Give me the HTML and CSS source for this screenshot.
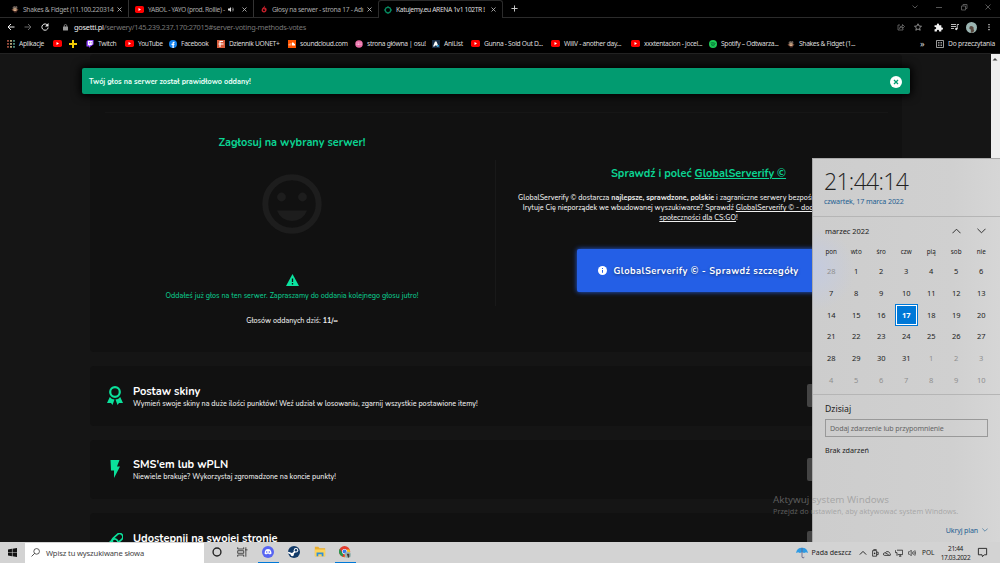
FILE: index.html
```
<!DOCTYPE html>
<html lang="pl">
  <head>
    <meta charset="utf-8">
    <title>Katujemy.eu ARENA 1v1 102TR</title>
    <link rel="stylesheet" href="styles.css">
  </head>
  <body>
    <svg class="defs">
      <symbol id="yt" viewBox="0 0 18 14"><rect width="18" height="14" rx="3.5" fill="#f00"/><path d="M7 4l5 3-5 3z" fill="#fff"/></symbol>
      <symbol id="x" viewBox="0 0 10 10"><path d="M1 1l8 8M9 1L1 9" stroke="currentColor" stroke-width="1.7" fill="none"/></symbol>
      <symbol id="fidget" viewBox="0 0 16 16"><path d="M3 5l3-3 3 1 3-1 1 4-2 3H4z" fill="#6d6058"/><path d="M1 9l3-1h8l3 1-3 3H4z" fill="#7a4a38"/><circle cx="8" cy="9" r="3.500" fill="#d9b08b"/><path d="M5 12h7l-1 3H6z" fill="#50302a"/><path d="M5 8h2M9 8h2" stroke="#222" stroke-width="1.5"/></symbol>
      <symbol id="down" viewBox="0 0 10 6"><path d="M.5.5L5 5 9.500.5" stroke="currentColor" stroke-width="1" fill="none"/></symbol>
      <symbol id="up" viewBox="0 0 10 6"><path d="M.5 5.500L5 1l4.500 4.500" stroke="currentColor" stroke-width="1" fill="none"/></symbol>
    </svg>

    <div class="tabs">
      <div class="tab t1"><svg class="i8"><use href="#fidget"/></svg><span class="name">Shakes &amp; Fidget (11.100.220314</span><svg class="x"><use href="#x"/></svg></div>
      <div class="tab t2"><svg class="yt"><use href="#yt"/></svg><span class="name">YABOL - YAYO (prod. Rollie) -</span>
        <svg class="snd" viewBox="0 0 12 10"><path d="M0 3h3l3-3v10L3 7H0z" fill="#ddd"/><path d="M8 3q2 2 0 4M9.500 1q3 4 0 8" stroke="#ddd" fill="none"/></svg>
        <svg class="x"><use href="#x"/></svg></div>
      <div class="tab t3"><svg class="i8" viewBox="0 0 16 16"><path d="M9 1q-1 3-4 5-3 4-1 7 4 4 8 0 3-5-1-8-1 2-2 2 1-3 0-6zM7 8q3 0 3 3-2 3-4 0 0-2 1-3z" fill="#c9202b" fill-rule="evenodd"/></svg><span class="name">Głosy na serwer - strona 17 - Adı</span><svg class="x"><use href="#x"/></svg></div>
      <div class="tab t4"><svg class="i8" viewBox="0 0 16 16"><circle cx="8" cy="8" r="5.500" fill="none" stroke="#07875e" stroke-width="2.500"/><path d="M8 0v3M8 13v3M0 8h3M13 8h3" stroke="#07875e" stroke-width="2"/></svg><span class="name">Katujemy.eu ARENA 1v1 102TR !</span><svg class="x"><use href="#x"/></svg></div>
      <svg class="plus" viewBox="0 0 8 8"><path d="M4 .5v7M.5 4h7" stroke="#ccc" stroke-width="1.100"/></svg>
      <div class="window">
        <svg viewBox="0 0 8 8"><path d="M1.500 2.500L4 5l2.500-2.500" fill="none" stroke="#555"/></svg>
        <svg viewBox="0 0 8 8"><path d="M1 4.500h6" stroke="#555"/></svg>
        <svg viewBox="0 0 8 8"><path d="M1.500 3h4v4h-4zM3 3V1.500h4v4H5.500" fill="none" stroke="#555"/></svg>
        <svg viewBox="0 0 8 8"><path d="M1.500 1.500l5 5M6.500 1.500l-5 5" stroke="#555" fill="none"/></svg>
      </div>
    </div>

    <div class="toolbar">
      <svg viewBox="0 0 16 16"><path d="M15 8H2M8 2L2 8l6 6" fill="none" stroke="#eee" stroke-width="2"/></svg>
      <svg viewBox="0 0 16 16"><path d="M1 8h13M8 2l6 6-6 6" fill="none" stroke="#666" stroke-width="2"/></svg>
      <svg viewBox="0 0 16 16"><path d="M13.500 5A6.300 6.300 0 1 0 14.300 9" fill="none" stroke="#eee" stroke-width="2"/><path d="M15 0v7H8z" fill="#eee"/></svg>
      <svg class="lock" viewBox="0 0 10 14"><rect y="5" width="10" height="8" rx="1" fill="#999"/><path d="M2.500 6V3.500a2.500 2.500 0 0 1 5 0V6" fill="none" stroke="#999" stroke-width="1.500"/></svg>
      <div class="url"><b>gosetti.pl</b>/serwery/145.239.237.170:27015#server-voting-methods-votes</div>
      <div class="actions">
        <svg viewBox="0 0 16 16"><path d="M6 4H2v10h10v-3M5 11q0-5 6-5V3l4 4-4 4V8Q7 8 5 11z" fill="none" stroke="#888" stroke-width="1.300"/></svg>
        <svg viewBox="0 0 16 16"><path d="M8 1.500l2 4.500 5 .5-3.800 3.200 1.200 4.800L8 12l-4.400 2.500 1.200-4.800L1 6.500 6 6z" fill="none" stroke="#bbb" stroke-width="1.400"/></svg>
        <svg class="puzzle" viewBox="0 0 16 16"><path d="M1 4h4V3a2 2 0 0 1 4 0v1h4v4h1a2 2 0 0 1 0 4h-1v3H9v-1a2 2 0 0 0-4 0v1H1v-4h1a2 2 0 0 0 0-4H1z" fill="#f3f3f3"/></svg>
        <svg viewBox="0 0 16 16"><path d="M0 3h10M0 7h10M0 11h6M12.500 12V3H16" fill="none" stroke="#ddd" stroke-width="1.700"/><circle cx="10.500" cy="12" r="2.300" fill="#ddd"/></svg>
        <svg class="avatar" viewBox="0 0 16 16"><circle cx="8" cy="8" r="8" fill="#9bb5b2"/><path d="M5 8q0-3 4-2 3 1 2 4l1 3-3 2.500H7V11l-2-1z" fill="#58483f"/></svg>
        <svg viewBox="0 0 16 16"><path d="M8 2v2.500M8 7v2.500M8 12v2.500" stroke="#ddd" stroke-width="2.500"/></svg>
      </div>
    </div>

    <div class="bookmarks">
      <div><svg class="i8" viewBox="0 0 16 16"><g stroke-width="3.500" stroke-dasharray="3.500 2.500"><path d="M2 0v16" stroke="#a54"/><path d="M8 0v16" stroke="#cb8"/><path d="M14 0v16" stroke="#598"/></g></svg>Aplikacje</div>
      <div><svg class="yt"><use href="#yt"/></svg></div>
      <div><svg class="i8" viewBox="0 0 16 16"><path d="M8 0v16M0 8h16" stroke="#f2cb05" stroke-width="4"/></svg></div>
      <div><svg class="i8" viewBox="0 0 16 16"><path d="M1 3l3-3h11v9l-6 4-3 3v-3H1z" fill="#9147ff"/><path d="M4 2h9v6l-2 2H8l-2 2v-2H4z" fill="#fff"/><path d="M7 4v3M10.500 4v3" stroke="#9147ff" stroke-width="1.500"/></svg>Twitch</div>
      <div><svg class="yt"><use href="#yt"/></svg>YouTube</div>
      <div><svg class="i8" viewBox="0 0 16 16"><circle cx="8" cy="8" r="8" fill="#1482ee"/><path d="M7 16v-6H5V7.500h2V6q0-3 4-2.500V6H9.500v1.500H11L10.700 10H9.500v6z" fill="#fff"/></svg>Facebook</div>
      <div><svg class="i8" viewBox="0 0 16 16"><rect width="16" height="16" fill="#d85c3c"/><path d="M6 2v12M3 8h10M12 3H7" stroke="#fff" stroke-width="2.200"/></svg>Dziennik UONET+</div>
      <div><svg class="i8" viewBox="0 0 16 16"><rect width="16" height="16" fill="#f50"/><path d="M8 5q4-1 4 2 3 0 2 4H8z" fill="#fff"/><path d="M2 8v3M4 7v4M6 6v5" stroke="#fff"/></svg>soundcloud.com</div>
      <div><svg class="i8" viewBox="0 0 16 16"><circle cx="8" cy="8" r="7.500" fill="#e86ca5"/><path d="M3 6h10M3 9h10" stroke="#f6bdd8" stroke-width="2" stroke-dasharray="2 1"/></svg>strona główna | osu!</div>
      <div><svg class="i8" viewBox="0 0 16 16"><rect width="16" height="16" fill="#172b42"/><path d="M2 13L6 3h3l4 10h-3l-1-2H6l-1 2z" fill="#fff"/><path d="M11 10h3v3h-5" fill="#1c9bd8"/></svg>AniList</div>
      <div><svg class="yt"><use href="#yt"/></svg>Gunna - Sold Out D...</div>
      <div><svg class="yt"><use href="#yt"/></svg>WillV - another day...</div>
      <div><svg class="yt"><use href="#yt"/></svg>xxxtentacion - jocel...</div>
      <div><svg class="i8" viewBox="0 0 16 16"><circle cx="8" cy="8" r="8" fill="#1dc956"/><path d="M3 6q5-2 10 1M4 9q4-2 8 0M5 11.500q3-1 6 .5" fill="none" stroke="#063" stroke-width="1.500"/></svg>Spotify – Odtwarza...</div>
      <div><svg class="i8"><use href="#fidget"/></svg>Shakes &amp; Fidget (1...</div>
      <div class="more">»</div>
      <div class="later"><svg class="i8" viewBox="0 0 16 16"><path d="M1 1h14v14H1zM4 5h3M9 5h3M4 8h3M9 8h3M4 11h3M9 11h3" fill="none" stroke="#ccc" stroke-width="1.500"/></svg>Do przeczytania</div>
    </div>

    <main class="page">
      <div class="content">
        <section class="card vote">
          <hr>
          <div class="cols">
            <div class="left">
              <h2>Zagłosuj na wybrany serwer!</h2>
              <svg class="smile" viewBox="0 0 60 60"><circle cx="30" cy="30" r="26.700" fill="none" stroke="#1d1d1d" stroke-width="6"/><circle cx="19.500" cy="23" r="4.400" fill="#1d1d1d"/><circle cx="40.500" cy="23" r="4.400" fill="#1d1d1d"/><path d="M15 36.500h30q-4 10.500-15 10.500T15 36.500z" fill="#1d1d1d"/></svg>
              <svg class="warn" viewBox="0 0 26 24"><path d="M13 0l13 24H0z" fill="#0be3a0"/><path d="M13 9v7M13 18v3" stroke="#111" stroke-width="2.600"/></svg>
              <p class="done">Oddałeś już głos na ten serwer. Zapraszamy do oddania kolejnego głosu jutro!</p>
              <p class="count">Głosów oddanych dziś: <b>11/∞</b></p>
            </div>
            <div class="right">
              <h2>Sprawdź i poleć <u>GlobalServerify ©</u></h2>
              <p class="text">GlobalServerify © dostarcza <b>najlepsze, sprawdzone, polskie</b> i zagraniczne serwery bezpośrednio do Twojej gry.<br>Irytuje Cię nieporządek we wbudowanej wyszukiwarce? Sprawdź <u>GlobalServerify © - dodatek dla całej naszej</u><br><u>społeczności dla CS:GO</u>!</p>
              <div class="button"><svg viewBox="0 0 16 16"><circle cx="8" cy="8" r="8" fill="#fff"/><path d="M8 3.500v2M8 7v5" stroke="#245fe6" stroke-width="1.800"/></svg>GlobalServerify © - Sprawdź szczegóły</div>
            </div>
          </div>
        </section>

        <section class="card method">
          <svg viewBox="0 0 16 20"><circle cx="8" cy="6" r="4.800" fill="none" stroke="#0be09b" stroke-width="2.200"/><path d="M2.800 11q2 2.500 4.700 2.500L5.500 19 4 17 0 17zM13.200 11q-2 2.500-4.700 2.500l2 5.500 1.500-2 4 0z" fill="#0be09b"/></svg>
          <div><h3>Postaw skiny</h3><p>Wymień swoje skiny na duże ilości punktów! Weź udział w losowaniu, zgarnij wszystkie postawione itemy!</p></div>
          <span class="go"></span>
        </section>
        <section class="card method">
          <svg viewBox="0 0 16 20"><path d="M3.500 1h9l-2.500 6.500h3L7 19v-7.500H4z" fill="#0be09b"/></svg>
          <div><h3>SMS'em lub wPLN</h3><p>Niewiele brakuje? Wykorzystaj zgromadzone na koncie punkty!</p></div>
          <span class="go"></span>
        </section>
        <section class="card method">
          <svg viewBox="0 0 16 20"><g fill="none" stroke="#0be09b" stroke-width="1.700"><rect x="4.500" y="2.500" width="12" height="6.500" rx="3.200" transform="rotate(-42 10.500 5.700)"/><rect x="-.5" y="8" width="12" height="6.500" rx="3.200" transform="rotate(-42 5.500 11)"/></g></svg>
          <div><h3>Udostępnij na swojej stronie</h3></div>
          <span class="go"></span>
        </section>
      </div>
      <div class="scrollbar"><svg viewBox="0 0 8 8"><path d="M1.500 5.500L4 3l2.500 2.500z" fill="#444"/></svg></div>
    </main>

    <footer class="taskbar">
      <svg class="win" viewBox="0 0 16 16"><path d="M0 2.500L7 1.500V7.500H0zM8 1.300L16 0v7.500H8zM0 8.500h7v6L0 13.500zM8 8.500h8V16l-8-1.200z" fill="#111"/></svg>
      <div class="search"><svg viewBox="0 0 16 16"><circle cx="10" cy="6" r="5" fill="none" stroke="#333" stroke-width="1.400"/><path d="M6.500 9.500L1 15" stroke="#333" stroke-width="1.500"/></svg>Wpisz tu wyszukiwane słowa</div>
      <div class="apps">
        <div><svg viewBox="0 0 14 14"><circle cx="7" cy="7" r="4.600" fill="none" stroke="#222" stroke-width="1.600"/></svg></div>
        <div><svg viewBox="0 0 14 14"><path d="M2 1.500v2h7v-2M2 5.500h7v3H2zM2 12.500v-2h7v2M11.500 1.500v11M10.500 4.500h3" fill="none" stroke="#333"/></svg></div>
        <div class="on"><svg viewBox="0 0 14 14"><circle cx="7" cy="7" r="7" fill="#5865f2"/><path d="M4.500 4q2.500-1 5 0 1.700 2.500 1.500 5l-2 1-.7-1H5.700L5 10 3 9q0-3 1.500-5z" fill="#fff"/><circle cx="5.500" cy="7" r=".9" fill="#5865f2"/><circle cx="8.500" cy="7" r=".9" fill="#5865f2"/></svg></div>
        <div><svg viewBox="0 0 14 14"><circle cx="7" cy="7" r="7" fill="#123a68"/><path d="M0 7.500l5 2 4-4" stroke="#fff" stroke-width="2" fill="none"/><circle cx="9.300" cy="5" r="2.600" fill="#fff"/><circle cx="9.300" cy="5" r="1.400" fill="#123a68"/><circle cx="5" cy="10" r="1.900" fill="#fff"/></svg></div>
        <div><svg viewBox="0 0 14 14"><path d="M1 1h4l1.500 1.500H13V12H1z" fill="#e9ad2d"/><path d="M1 4h12v8H1z" fill="#fbd35c"/><path d="M3 12V7.500h8V12H9V9.500H5V12z" fill="#2f8fd8"/></svg></div>
        <div class="on"><svg viewBox="0 0 14 14"><circle cx="6.500" cy="6.500" r="6.500" fill="#e33b2e"/><path d="M.9 3.200L5 10l-1 2.500A6.500 6.500 0 0 1 .9 3.200z" fill="#239a50"/><path d="M12.300 4A6.500 6.500 0 0 1 6 13l3-5V4z" fill="#fbc116"/><circle cx="6.500" cy="6.500" r="3" fill="#fff"/><circle cx="6.500" cy="6.500" r="2.300" fill="#3b7ded"/><circle cx="10.300" cy="10.300" r="3.700" fill="#9bb5b2"/><path d="M9 9h3v3l-1 2-1-2z" fill="#463b34"/></svg></div>
      </div>
      <div class="tray">
        <svg class="rain" viewBox="0 0 14 14"><path d="M0 7Q1 1 7 1t7 6l-2.300-1L9.500 7 7 6 4.500 7l-2-1z" fill="#2f9be4"/><path d="M7 1v11q2 2 2.500-.5" fill="none" stroke="#668" stroke-width="1"/></svg>
        <span class="weather">Pada deszcz</span>
        <svg class="s" viewBox="0 0 10 10"><path d="M1 7l4-4 4 4" fill="none" stroke="#222" stroke-width="1.200"/></svg>
        <svg class="s" viewBox="0 0 10 10"><path d="M2 2h5v7H2zM3 .5h4M7 4h2v3H7" fill="none" stroke="#222"/><circle cx="4.500" cy="5.500" r="1" fill="#222"/></svg>
        <svg class="s" viewBox="0 0 10 10"><path d="M2 8Q0 8 .7 5.500 1.500 4.500 3 5q1-3 4-1.500 1 .5 1 1.500 2 .5 1 3zM3 5l4 2" fill="none" stroke="#222"/></svg>
        <svg class="s" viewBox="0 0 10 10"><path d="M2.500 1.500H9.500V7H3.500M5 9h3M6.500 7v2M.5 1.500v3h2v4" fill="none" stroke="#222"/></svg>
        <svg class="s" viewBox="0 0 10 10"><path d="M.5 3.500h1.500L4 1.500v7L2 6.500H.5zM5.500 3.500q1 1.500 0 3M7 2.500q1.700 2.500 0 5M8.500 1.500q2 3.500 0 7" fill="none" stroke="#222" stroke-width=".8"/></svg>
        <span class="lang">POL</span>
        <span class="time">21:44<br>17.03.2022</span>
        <svg class="note" viewBox="0 0 12 12"><path d="M1.500 1.500h9v7H8L6 10.500l-.5-2h-4z" fill="none" stroke="#222"/></svg>
      </div>
    </footer>

    <div class="toast"><span>Twój głos na serwer został prawidłowo oddany!</span>
      <svg viewBox="0 0 12 12"><circle cx="6" cy="6" r="6" fill="#fff"/><path d="M4 4l4 4M8 4L4 8" stroke="#029b70" stroke-width="1.300"/></svg></div>

    <aside class="calendar">
      <div class="head">
        <div class="clock">21:44:14</div>
        <div class="date">czwartek, 17 marca 2022</div>
      </div>
      <div class="month"><span>marzec 2022</span><svg><use href="#up"/></svg><svg><use href="#down"/></svg></div>
      <div class="days names"><i>pon</i><i>wto</i><i>śro</i><i>czw</i><i>pią</i><i>sob</i><i>nie</i></div>
      <div class="days">
        <i class="off">28</i><i>1</i><i>2</i><i>3</i><i>4</i><i>5</i><i>6</i>
        <i>7</i><i>8</i><i>9</i><i>10</i><i>11</i><i>12</i><i>13</i>
        <i>14</i><i>15</i><i>16</i><i class="today">17</i><i>18</i><i>19</i><i>20</i>
        <i>21</i><i>22</i><i>23</i><i>24</i><i>25</i><i>26</i><i>27</i>
        <i>28</i><i>29</i><i>30</i><i>31</i><i class="off">1</i><i class="off">2</i><i class="off">3</i>
        <i class="off">4</i><i class="off">5</i><i class="off">6</i><i class="off">7</i><i class="off">8</i><i class="off">9</i><i class="off">10</i>
      </div>
      <div class="agenda">
        <div class="h">Dzisiaj</div>
        <div class="field">Dodaj zdarzenie lub przypomnienie</div>
        <div class="none">Brak zdarzeń</div>
      </div>
      <div class="hide"><span>Ukryj plan</span><svg><use href="#down"/></svg></div>
    </aside>

    <div class="activate"><div class="a1">Aktywuj system Windows</div><div class="a2">Przejdź do ustawień, aby aktywować system Windows.</div></div>
  </body>
</html>
```
FILE: styles.css
```
*{
  margin: 0;
  padding: 0;
  box-sizing: border-box;
}
body{
  width: 1000px;
  height: 563px;
  overflow: hidden;
  display: flex;
  flex-direction: column;
  position: relative;
  background: #000;
  color: #ddd;
  font-family: "Noto Sans", sans-serif;
  font-size: 7px;
  white-space: nowrap;
}
svg{
  display: block;
  flex: none;
}
.defs{
  position: absolute;
  width: 0;
  height: 0;
}
.i8{
  width: 8px;
  height: 8px;
}
.yt{
  width: 9px;
  height: 7px;
}

/* przegladarka */
.tabs{
  height: 18px;
  flex: none;
  display: flex;
  border-bottom: 1px solid #2b2b2b;
}
.tab{
  display: flex;
  align-items: center;
  padding: 1px 6px 0 7px;
  height: 17px;
  color: #aaa;
  font-size: 6.7px;
  letter-spacing: -.3px;
}
.tab .name{
  margin-left: 4px;
  flex: 1;
}
.tab .x{
  width: 5px;
  height: 5px;
  color: #bbb;
}
.tab .snd{
  width: 6px;
  height: 5px;
  margin-right: 8px;
}
.t1{
  width: 129px;
  padding-left: 11px;
  border-right: 1px solid #333;
}
.t2{
  width: 125px;
  padding-left: 6px;
  border-right: 1px solid #333;
}
.t2 .name{
  letter-spacing: -.38px;
}
.t3{
  width: 124px;
  padding-left: 6px;
}
.t4{
  width: 125px;
  height: 18px;
  background: #000;
  border: 1px solid #2b2b2b;
  border-bottom: 0;
  border-radius: 3px 3px 0 0;
  color: #ddd;
  padding: 0 6px 0 5px;
  letter-spacing: -.38px;
}
.plus{
  width: 7px;
  height: 7px;
  margin: 5px 0 0 8px;
}
.window{
  display: flex;
  gap: 16.3px;
  margin: 3px 0 0 auto;
  padding-right: 8px;
}
.window svg{
  width: 8px;
  height: 8px;
}
.toolbar{
  height: 18px;
  flex: none;
  display: flex;
  align-items: center;
  padding-left: 7px;
}
.toolbar svg{
  width: 8px;
  height: 8px;
  margin-right: 9px;
}
.toolbar .lock{
  width: 5px;
  height: 7px;
  margin: 0 6px 0 5px;
}
.url{
  font-size: 7.4px;
  color: #777;
  letter-spacing: -.27px;
}
.url b{
  color: #eee;
  font-weight: normal;
}
.actions{
  display: flex;
  align-items: center;
  margin-left: auto;
}
.toolbar .puzzle{
  width: 9px;
  height: 9px;
  margin: 0 8px 0 3px;
}
.toolbar .avatar{
  width: 11px;
  height: 11px;
  margin-right: 8px;
  margin-left: -2px;
}
.toolbar .actions svg:last-child{
  margin-right: 7px;
}
.bookmarks{
  height: 18px;
  flex: none;
  display: grid;
  grid-template-columns: 46px 16px 17px 39px 44px 48px 71px 67px 77px 39px 80px 80px 78px 78px 133px 16px 64px;
  align-items: center;
  padding-left: 7px;
  padding-bottom: 2px;
  border-bottom: 1px solid #222;
  font-size: 6.7px;
  letter-spacing: -.32px;
}
.bookmarks div{
  display: flex;
  align-items: center;
  gap: 4px;
}
.bookmarks .more{
  font-size: 9px;
}
.bookmarks .later{
  letter-spacing: -.2px;
}

/* strona */
.page{
  flex: 1;
  min-height: 0;
  overflow: hidden;
  display: flex;
  justify-content: space-between;
  background: #151515;
  font-family: "Nunito", "Lato", sans-serif;
  font-size: 7.2px;
  font-weight: 500;
  color: #eee;
}
.content{
  width: 812px;
  margin-left: 90px;
}
.card{
  background: #111;
  border-radius: 4px;
}
.vote{
  height: 298px;
  padding: 58px 14px 0 15px;
  margin-bottom: 14px;
}
.vote hr{
  border: 0;
  height: 1px;
  background: #161616;
}
.cols{
  display: flex;
}
.cols h2{
  font-size: 10.95px;
  line-height: 16px;
  color: #0bd493;
}
.left{
  width: 390px;
  padding: 22px 16px 0 0;
  display: flex;
  flex-direction: column;
  align-items: center;
  height: 193px;
}
.smile{
  width: 60px;
  height: 60px;
  margin-top: 23px;
}
.warn{
  width: 13px;
  height: 12px;
  margin-top: 40px;
}
.done{
  color: #0bc88b;
  line-height: 10px;
  margin-top: 5px;
}
.count{
  line-height: 10px;
  margin-top: 15px;
}
.right{
  flex: 1;
  margin-top: 47px;
  height: 146px;
  border-left: 1px solid #191919;
  padding: 6px 0 0 13px;
  display: flex;
  flex-direction: column;
  align-items: center;
}
.text{
  line-height: 10px;
  margin-top: 11px;
  text-align: center;
}
.text u:first-of-type{
  margin-right: -4px;
}
.button{
  width: 244px;
  height: 43px;
  margin-top: 26px;
  display: flex;
  align-items: center;
  padding-left: 21px;
  gap: 7px;
  border-radius: 2px;
  background: #245fe6;
  box-shadow: 0 0 5px #245fe6;
  font-size: 9.3px;
  font-weight: bold;
  letter-spacing: .45px;
  color: #fff;
  text-shadow: 0 1px 3px rgba(0,0,0,.5);
}
.button svg{
  width: 9px;
  height: 9px;
}
.method{
  height: 59.5px;
  margin-bottom: 14px;
  display: flex;
  align-items: center;
}
.method svg{
  width: 16px;
  height: 20px;
  margin-left: 17px;
}
.method div{
  margin-left: 10px;
  height: 22px;
}
.method h3{
  font-size: 11px;
  line-height: 13px;
  color: #fff;
}
.method p{
  line-height: 12px;
}
.go{
  width: 70px;
  height: 23px;
  margin-left: auto;
  margin-right: 25px;
  background: #444;
  border-radius: 2px;
}
.scrollbar{
  width: 9px;
  background: #eee;
  padding-top: 1px;
}
.scrollbar svg{
  width: 8px;
  height: 8px;
}

/* pasek zadan */
.taskbar{
  height: 21px;
  flex: none;
  display: flex;
  align-items: center;
  background: #d3d3d3;
  color: #222;
}
.win{
  width: 9px;
  height: 9px;
  margin-left: 8px;
}
.search{
  width: 179px;
  height: 20px;
  margin-left: 8px;
  background: #fff;
  display: flex;
  align-items: center;
  padding-left: 6px;
  gap: 6px;
  font-size: 7.6px;
  letter-spacing: -.13px;
  color: #444;
}
.search svg{
  width: 9px;
  height: 9px;
}
.apps{
  display: flex;
  height: 21px;
  margin-left: 2px;
}
.apps div{
  width: 21px;
  margin-right: 4.8px;
  padding-top: 4px;
  display: flex;
  justify-content: center;
}
.apps .on{
  border-bottom: 1px solid #0078d7;
}
.apps svg{
  width: 12px;
  height: 12px;
}
.tray{
  margin-left: auto;
  height: 21px;
  display: flex;
  align-items: center;
}
.rain{
  width: 12px;
  height: 12px;
  margin-right: 4px;
}
.weather{
  width: 47px;
}
.s{
  width: 8px;
  height: 8px;
  margin-right: 4.300px;
}
.lang{
  width: 18px;
  margin-left: 2px;
  font-size: 6.5px;
}
.time{
  width: 31px;
  font-size: 6.5px;
  line-height: 9px;
  text-align: center;
  letter-spacing: -.35px;
}
.note{
  width: 11px;
  height: 11px;
  margin: 0 12px 0 6px;
}

/* nakladki */
.toast{
  position: absolute;
  left: 82px;
  top: 68px;
  width: 828px;
  height: 26px;
  display: flex;
  align-items: center;
  justify-content: space-between;
  padding: 1px 8px 0 7px;
  background: #029b70;
  border-radius: 2px;
  box-shadow: 0 0 9px 2px #000;
  color: #e9fff8;
  font: bold 7.3px "Nunito", "Lato", sans-serif;
}
.toast svg{
  width: 12px;
  height: 12px;
}
.calendar{
  position: absolute;
  left: 812px;
  top: 158px;
  width: 188px;
  height: 384px;
  background: radial-gradient(circle at 0 110px, #c4cbe0 0, rgba(205,205,208,0) 42px), linear-gradient(90deg, #cdcdcd, #d0d0d0 75%, #d6d6d6);
  border-left: 1px solid #aaa;
  border-top: 1px solid #aaa;
  color: #222;
}
.head{
  height: 58px;
  padding: 6px 0 0 11px;
  border-bottom: 1px solid #b5b5b5;
}
.clock{
  font: 300 23px/32px "Open Sans Light", "Open Sans", sans-serif;
  letter-spacing: -.7px;
}
.date{
  font-size: 7.2px;
  line-height: 8px;
  letter-spacing: -.15px;
  color: #1f5f92;
}
.month{
  display: flex;
  align-items: center;
  height: 27px;
  padding: 0 14px 0 12px;
  font-size: 7.5px;
  letter-spacing: -.05px;
}
.month span{
  flex: 1;
}
.month svg{
  width: 9px;
  height: 6px;
  margin-left: 16px;
}
.days{
  display: grid;
  grid-template-columns: repeat(7, 25px);
  grid-auto-rows: 21.85px;
  padding-left: 5.7px;
  font-size: 7.5px;
}
.days i{
  font-style: normal;
  display: flex;
  align-items: center;
  justify-content: center;
}
.names{
  grid-auto-rows: 14px;
  padding-bottom: 2px;
  font-size: 6.3px;
}
.days .off{
  color: #8f8f8f;
}
.days .today{
  margin: 0 1px;
  border: 1px solid #0078d7;
  box-shadow: inset 0 0 0 1px #fff;
  background: #0078d7;
  color: #fff;
  font-weight: bold;
}
.agenda{
  margin-top: 3px;
  border-top: 1px solid #b5b5b5;
  padding: 8px 12px 0;
}
.agenda .h{
  font-size: 8.7px;
  line-height: 13px;
}
.field{
  height: 18px;
  margin-top: 3px;
  padding-left: 4px;
  border: 1px solid #999;
  font-size: 7.1px;
  letter-spacing: -.13px;
  line-height: 16px;
  color: #666;
}
.none{
  margin-top: 7px;
  line-height: 12px;
  font-size: 7.2px;
}
.hide{
  display: flex;
  align-items: center;
  justify-content: flex-end;
  gap: 4px;
  padding-right: 12px;
  margin-top: 69px;
  color: #1f5f92;
  font-size: 7.1px;
  letter-spacing: -.15px;
  line-height: 10px;
}
.hide svg{
  width: 6px;
  height: 4px;
}
.activate{
  position: absolute;
  left: 773px;
  top: 493px;
  color: rgba(140,140,140,.6);
}
.a1{
  font-size: 9.8px;
  line-height: 13px;
}
.a2{
  font-size: 7.3px;
  line-height: 10px;
}
```
